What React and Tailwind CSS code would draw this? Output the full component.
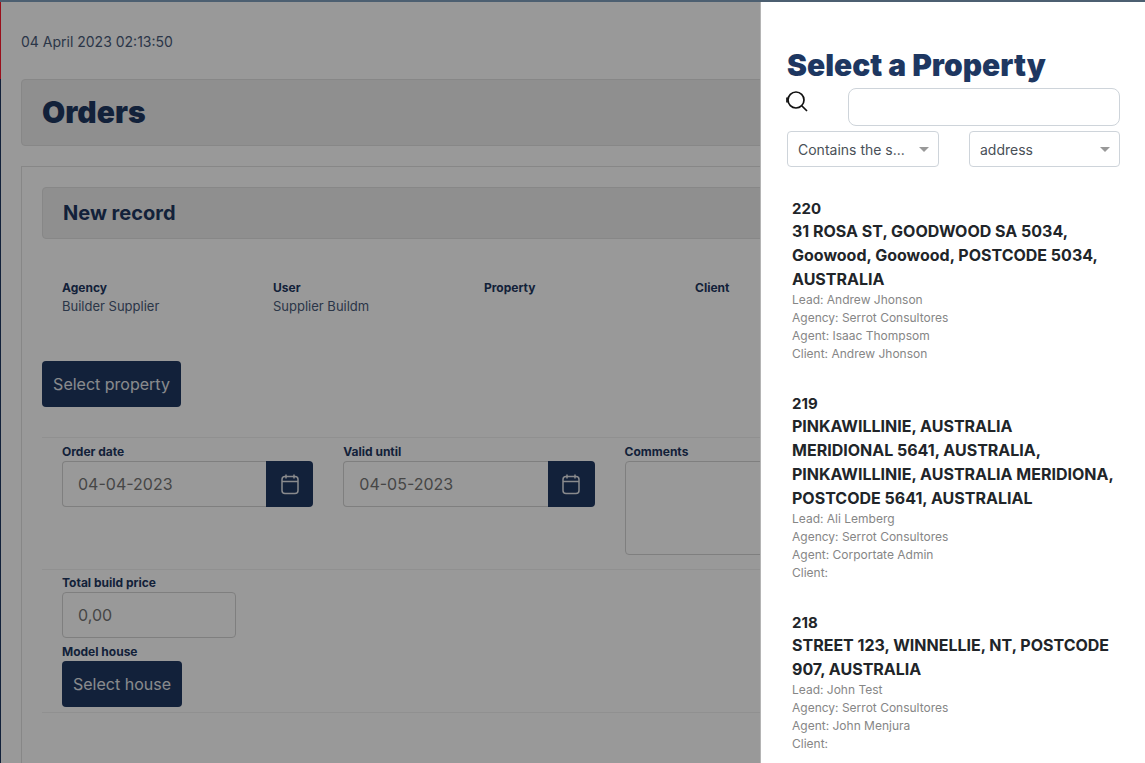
const INFO = [
  { label: 'Agency', value: 'Builder Supplier' },
  { label: 'User', value: 'Supplier Buildm' },
  { label: 'Property', value: '' },
  { label: 'Client', value: '' },
]

const PROPERTIES = [
  {
    id: 220,
    address: '31 ROSA ST, GOODWOOD SA 5034, Goowood, Goowood, POSTCODE 5034, AUSTRALIA',
    lead: 'Andrew Jhonson',
    agent: 'Isaac Thompsom',
    client: 'Andrew Jhonson',
  },
  {
    id: 219,
    address:
      'PINKAWILLINIE, AUSTRALIA MERIDIONAL 5641, AUSTRALIA, PINKAWILLINIE, AUSTRALIA MERIDIONA, POSTCODE 5641, AUSTRALIAL',
    lead: 'Ali Lemberg',
    agent: 'Corportate Admin',
    client: '',
  },
  {
    id: 218,
    address: 'STREET 123, WINNELLIE, NT, POSTCODE 907, AUSTRALIA',
    lead: 'John Test',
    agent: 'John Menjura',
    client: '',
  },
]

function CalendarIcon() {
  return (
    <svg width="18" height="21" viewBox="0 0 18 21" fill="none" stroke="currentColor" strokeWidth="1.5">
      <rect x="1" y="2.5" width="16" height="17" rx="3" />
      <path d="M5 .5v4M13 .5v4M1 7.5h16" />
    </svg>
  )
}

function DateField({ label, value }) {
  return (
    <div className="w-[251.3px] shrink-0">
      <div className="text-[12px] leading-[14px] font-bold text-[#1e3761] mb-[2px]">{label}</div>
      <div className="flex h-[46px]">
        <div className="flex-1 border border-[#d4d4d4] border-r-0 rounded-l-[4px] pl-[15px] flex items-center text-[16px] text-[#757575]">
          {value}
        </div>
        <div className="w-[47px] bg-[#1e3761] rounded-r-[4px] flex items-center justify-center text-[#e5e7eb]">
          <CalendarIcon />
        </div>
      </div>
    </div>
  )
}

function Select({ label, className }) {
  return (
    <div className={`h-[36px] border border-[#ced4da] rounded-[4px] flex items-center justify-between text-[14px] text-[#495057] ${className}`}>
      <span>{label}</span>
      <span className="w-0 h-0 border-x-[5px] border-x-transparent border-t-[5px] border-t-[#999999]" />
    </div>
  )
}

function PropertyRow({ item }) {
  return (
    <div className="mb-[31px]">
      <div className="text-[16px] leading-[24px] font-bold text-[#212529]">
        <div className="text-[15px] leading-[20px]">{item.id}</div>
        <div>{item.address}</div>
      </div>
      <div className="text-[12px] leading-[18px] text-[#868686]">
        <div>Lead: {item.lead}</div>
        <div>Agency: Serrot Consultores</div>
        <div>Agent: {item.agent}</div>
        <div>Client: {item.client}</div>
      </div>
    </div>
  )
}

export default function App() {
  return (
    <div className="relative h-[763px] w-[1145px] overflow-hidden bg-white font-['Inter',sans-serif]">
      <div className="h-[2px] bg-[#7f9fbd]" />
      <div className="flex h-[761px]">
        <div className="w-[1px] shrink-0 flex flex-col">
          <div className="h-[77px] bg-[#ff1a2e]" />
          <div className="flex-1 bg-[#1e3761]" />
        </div>
        <div className="flex-1 pl-[20px] pr-[20px] min-w-0">
          <div className="h-[77px] flex items-center text-[14px] text-[#495a78] pt-[1px]">04 April 2023 02:13:50</div>
          <div className="h-[67px] bg-[#eeeeee] border border-[#e2e2e2] rounded-[4px] px-[20px] flex items-center">
            <h1 className="text-[30px] font-black text-[#1e3761]">Orders</h1>
          </div>
          <div className="mt-[20px] h-[620px] border border-[#e2e2e2] px-[20px] pt-[20px]">
            <div className="h-[52px] bg-[#eeeeee] border border-[#e2e2e2] rounded-[4px] px-[20px] flex items-center">
              <h2 className="text-[20px] font-bold text-[#1e3761]">New record</h2>
            </div>

            <div className="mt-[40px] flex pl-[20px] text-[12px] leading-[18px]">
              {INFO.map((info) => (
                <div key={info.label} className="w-[211px] shrink-0">
                  <div className="font-bold text-[#1e3761]">{info.label}</div>
                  <div className="text-[13px] text-[#495a78]">{info.value}</div>
                </div>
              ))}
            </div>

            <button className="mt-[46px] h-[46px] w-[139px] bg-[#1e3761] rounded-[4px] text-[16px] text-[#e5e7eb]">
              Select property
            </button>

            <div className="mt-[30px] border-t border-[#f0f0f0] pl-[20px] pt-[7px] h-[132px] flex gap-[30px]">
              <DateField label="Order date" value="04-04-2023" />
              <DateField label="Valid until" value="04-05-2023" />
              <div className="flex-1">
                <div className="text-[12px] leading-[14px] font-bold text-[#1e3761] mb-[2px]">Comments</div>
                <div className="h-[94px] border border-[#d4d4d4] rounded-[4px]" />
              </div>
            </div>

            <div className="border-t border-[#f0f0f0] pl-[20px] pt-[6px] pb-[5px] border-b">
              <div className="text-[12px] leading-[14px] font-bold text-[#1e3761] mb-[2px]">Total build price</div>
              <div className="w-[174px] h-[46px] border border-[#d4d4d4] rounded-[4px] pl-[15px] flex items-center text-[16px] text-[#757575]">
                0,00
              </div>
              <div className="text-[12px] leading-[14px] font-bold text-[#1e3761] mt-[7px] mb-[2px]">Model house</div>
              <button className="h-[46px] w-[120px] bg-[#1e3761] rounded-[4px] text-[16px] text-[#e5e7eb]">
                Select house
              </button>
            </div>
          </div>
        </div>
      </div>

      <div className="absolute inset-0 bg-black/40" />

      <div className="absolute top-[2px] right-0 bottom-0 w-[385px] border-l border-[#b4b4b4] bg-white overflow-hidden pl-[26px] pr-[25px]">
        <h2 className="mt-[44px] text-[30px] leading-[38px] font-black text-[#1e3761]">Select a Property</h2>
        <div className="flex mt-[4px]">
          <svg width="24" height="24" viewBox="0 0 24 24" fill="none" stroke="#111111" strokeWidth="1.7" className="mt-[2px] ml-[-1px] shrink-0">
            <circle cx="10" cy="10" r="8" />
            <path d="M16 16l5 5M1 7.5v5" />
          </svg>
          <div className="ml-[38px] flex-1 h-[38px] border border-[#ced4da] rounded-[8px]" />
        </div>
        <div className="flex justify-between mt-[5px]">
          <Select label="Contains the s..." className="w-[152px] pl-[10px] pr-[9px]" />
          <Select label="address" className="w-[151px] pl-[10px] pr-[9px]" />
        </div>
        <div className="pl-[5px] pr-[5px] mt-[32px]">
          {PROPERTIES.map((item) => (
            <PropertyRow key={item.id} item={item} />
          ))}
        </div>
      </div>
    </div>
  )
}
